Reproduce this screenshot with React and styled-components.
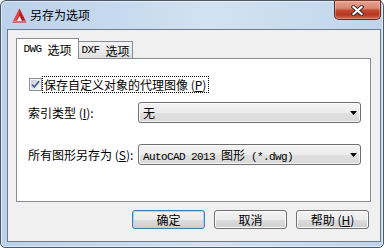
import React from 'react';
import styled, { createGlobalStyle } from 'styled-components';

const Global = createGlobalStyle`
  html, body { margin: 0; padding: 0; background: #ffffff; }
  body {
    font-family: "Noto Sans CJK SC", "Noto Sans", sans-serif;
    font-size: 12px;
    color: #000;
  }
  * { box-sizing: border-box; }
`;

const Window = styled.div`
  width: 384px;
  height: 248px;
  border: 1px solid #4b5a6b;
  border-radius: 6px 6px 5px 5px;
  background: linear-gradient(90deg, #bcd2ea 0%, #c6d9ee 30%, #d3e2f2 55%, #cadcef 75%, #bfd4eb 100%);
  box-shadow: inset 0 0 0 1px rgba(255, 255, 255, 0.5);
  display: flex;
  flex-direction: column;
`;

const TitleBar = styled.div`
  height: 28px;
  flex: none;
  display: flex;
  align-items: flex-start;
  padding: 0 2px 0 11px;
`;

const AppIcon = styled.svg`
  width: 15px;
  height: 15px;
  margin-top: 7px;
  flex: none;
`;

const Title = styled.div`
  margin: 6px 0 0 3px;
  line-height: 16px;
  font-size: 12px;
  color: #000;
`;

const CloseButton = styled.div`
  margin-left: auto;
  margin-top: -1px;
  width: 47px;
  height: 20px;
  border: 1px solid #5b2a22;
  border-top-color: #7a3a30;
  border-radius: 0 0 5px 5px;
  background: linear-gradient(#e6a392 0%, #d98670 40%, #c24a34 52%, #b8351f 75%, #cf6a52 100%);
  box-shadow: inset 0 0 0 1px rgba(255, 220, 210, 0.35);
  display: flex;
  align-items: center;
  justify-content: center;
`;

const Client = styled.div`
  flex: 1;
  margin: 0 2px 5px 6px;
  border: 1px solid #6e7d8e;
  background: #f0f0f0;
  display: flex;
  flex-direction: column;
  padding: 8px 9px 0 8px;
`;

const TabStrip = styled.div`
  height: 20px;
  flex: none;
  display: flex;
  align-items: flex-end;
`;

const Tab = styled.div`
  display: flex;
  align-items: center;
  justify-content: center;
  white-space: pre;
  font-size: 12px;
  border: 1px solid #898c95;
  border-bottom: none;
  ${({ $active }) =>
    $active
      ? `
    width: 63px;
    height: 21px;
    margin-bottom: -1px;
    background: #ffffff;
    position: relative;
    z-index: 1;
  `
      : `
    width: 54px;
    height: 17px;
    border-left: none;
    background: linear-gradient(#f4f4f4 0%, #ebebeb 50%, #dedede 100%);
  `}
`;

const Lat = styled.span`
  font-family: "Liberation Mono", monospace;
  font-size: 11px;
  letter-spacing: -0.6px;
`;

const Panel = styled.div`
  height: 144px;
  flex: none;
  width: 355px;
  border: 1px solid #898c95;
  background: #ffffff;
  display: flex;
  flex-direction: column;
  padding: 17px 9px 0 11px;
`;

const CheckRow = styled.div`
  height: 17px;
  display: flex;
  align-items: center;
`;

const CheckBox = styled.svg`
  width: 13px;
  height: 13px;
  margin-left: 1px;
  flex: none;
`;

const FocusLabel = styled.span`
  margin-left: 0px;
  height: 17px;
  line-height: 15px;
  padding: 0 2px 0 1px;
  border: 1px dotted #000;
  white-space: nowrap;
`;

const FieldRow = styled.div`
  display: flex;
  align-items: center;
  margin-top: ${({ $top }) => $top}px;
`;

const FieldLabel = styled.div`
  width: 110px;
  flex: none;
  white-space: nowrap;
`;

const Combo = styled.div`
  flex: 1;
  height: 21px;
  border: 1px solid #707070;
  border-radius: 3px;
  background: linear-gradient(#f3f3f3 0%, #ececec 50%, #e0e0e0 51%, #d9d9d9 100%);
  box-shadow: inset 0 0 0 1px rgba(255, 255, 255, 0.7);
  display: flex;
  align-items: center;
  padding: 0 3px 0 4px;
  white-space: pre;
`;

const ComboText = styled.span`
  flex: 1;
`;

const Arrow = styled.svg`
  width: 7px;
  height: 4px;
  flex: none;
`;

const ButtonRow = styled.div`
  display: flex;
  justify-content: flex-end;
  gap: 9px;
  padding-top: 8px;
  margin-right: 2px;
`;

const Button = styled.div`
  width: 73px;
  height: 19px;
  border: 1px solid ${({ $default }) => ($default ? '#3c7fb1' : '#707070')};
  border-radius: 3px;
  background: linear-gradient(#f2f2f2 0%, #ebebeb 50%, #dddddd 51%, #cfcfcf 100%);
  box-shadow: inset 0 0 0 1px ${({ $default }) => ($default ? '#9fd9f4' : '#fbfbfb')};
  display: flex;
  align-items: center;
  justify-content: center;
  font-size: 12px;
  white-space: pre;
`;

export default function App() {
  return (
    <>
      <Global />
      <Window>
        <TitleBar>
          <AppIcon viewBox="0 0 15 15">
            <polygon points="7.5,0.5 14.5,14.5 0.5,14.5" fill="#b81d24" />
            <polygon points="7.5,0.5 0.5,14.5 4,14.5 7.5,6" fill="#e0474d" />
            <polygon points="7.5,8 10,13 5,13" fill="#ffffff" />
            <polygon points="1.5,12.5 13.5,12.5 14.2,14 0.8,14" fill="#f3a6a8" opacity="0.6" />
          </AppIcon>
          <Title>另存为选项</Title>
          <CloseButton>
            <svg width="13" height="11" viewBox="0 0 13 11">
              <path d="M2.5 2 L10.5 9 M10.5 2 L2.5 9" stroke="#3b2a2a" strokeWidth="4" strokeLinecap="square" />
              <path d="M2.5 2 L10.5 9 M10.5 2 L2.5 9" stroke="#ffffff" strokeWidth="2.2" strokeLinecap="square" />
            </svg>
          </CloseButton>
        </TitleBar>
        <Client>
          <TabStrip>
            <Tab $active>
              <Lat>DWG </Lat>选项
            </Tab>
            <Tab>
              <Lat>DXF </Lat>选项
            </Tab>
          </TabStrip>
          <Panel>
            <CheckRow>
              <CheckBox viewBox="0 0 13 13">
                <defs>
                  <linearGradient id="cbg" x1="0" y1="0" x2="1" y2="1">
                    <stop offset="0" stopColor="#c9cdd3" />
                    <stop offset="1" stopColor="#f7f7f7" />
                  </linearGradient>
                </defs>
                <rect x="0.5" y="0.5" width="12" height="12" fill="#f4f4f4" stroke="#8e8f8f" />
                <rect x="2" y="2" width="9" height="9" fill="url(#cbg)" />
                <path d="M3 6.5 L5.3 9 L10 3.3" fill="none" stroke="#4a5f8e" strokeWidth="1.8" />
              </CheckBox>
              <FocusLabel>
                保存自定义对象的代理图像 (<u>P</u>)
              </FocusLabel>
            </CheckRow>
            <FieldRow $top={9}>
              <FieldLabel>
                索引类型 (<u>I</u>):
              </FieldLabel>
              <Combo>
                <ComboText>无</ComboText>
                <Arrow viewBox="0 0 7 4">
                  <polygon points="0,0 7,0 3.5,4" fill="#000" />
                </Arrow>
              </Combo>
            </FieldRow>
            <FieldRow $top={21}>
              <FieldLabel>
                所有图形另存为 (<u>S</u>):
              </FieldLabel>
              <Combo>
                <ComboText>
                  <Lat>AutoCAD 2013 </Lat>图形<Lat> (*.dwg)</Lat>
                </ComboText>
                <Arrow viewBox="0 0 7 4">
                  <polygon points="0,0 7,0 3.5,4" fill="#000" />
                </Arrow>
              </Combo>
            </FieldRow>
          </Panel>
          <ButtonRow>
            <Button $default>确定</Button>
            <Button>取消</Button>
            <Button>
              帮助 (<u>H</u>)
            </Button>
          </ButtonRow>
        </Client>
      </Window>
    </>
  );
}
